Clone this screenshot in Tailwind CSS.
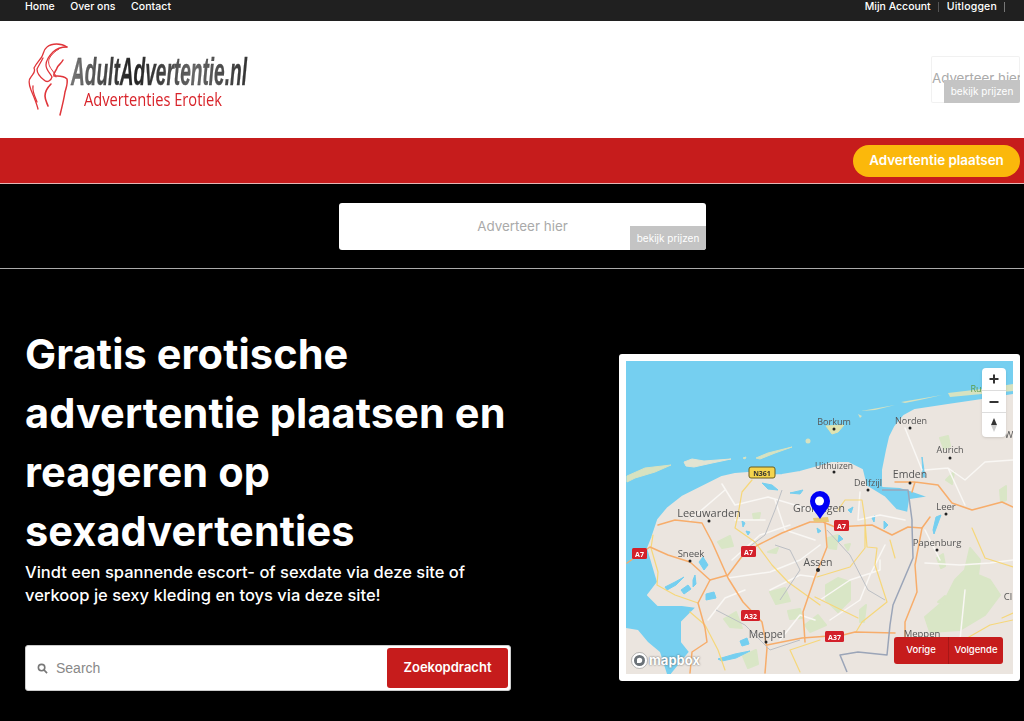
<!DOCTYPE html>
<html lang="nl">

<head>
  <meta charset="UTF-8">
  <meta name="viewport" content="width=device-width, initial-scale=1.0">
  <title>AdultAdvertentie.nl</title>
  <script src="https://cdn.jsdelivr.net/npm/@tailwindcss/browser@4"></script>
</head>

<body class="bg-black font-['Inter',sans-serif] overflow-hidden h-[721px]">
  <!-- Top bar -->
  <nav class="h-[21px] bg-[#202020] flex items-center justify-between pl-[25px] pr-[19px] text-white text-[10.5px] font-medium pb-[7px]">
    <div class="flex gap-[15.500px]">
      <a>Home</a>
      <a>Over ons</a>
      <a class="tracking-[0.1px]">Contact</a>
    </div>
    <div class="flex items-center">
      <a>Mijn Account</a>
      <span class="w-px h-[10px] bg-[#555] ml-[7px] mr-[8px]"></span>
      <a class="tracking-[0.2px]">Uitloggen</a>
      <span class="w-px h-[10px] bg-[#777] ml-[7px]"></span>
    </div>
  </nav>

  <!-- Header with logo -->
  <header class="h-[117px] bg-white flex items-center justify-between pr-[4px] pl-[28px]">
    <svg class="w-[222px] h-[76px] mt-[1px] overflow-visible blur-[0.4px]" viewBox="28 40 222 76">
      <defs>
        <linearGradient id="logoText" x1="0" y1="0" x2="1" y2="0">
          <stop offset="0" stop-color="#777" />
          <stop offset="0.35" stop-color="#222" />
          <stop offset="0.7" stop-color="#666" />
          <stop offset="1" stop-color="#333" />
        </linearGradient>
      </defs>
      <g fill="none" stroke="#e0353a" stroke-linecap="round" stroke-linejoin="round">
        <path stroke-width="1.300" d="M67 45C61 41 52 41 47 45 43 48 44 52 41 56 38 60 36 62 34 66 36 70 33 72 31 75 28 78 29 83 31 88 33 93 36 99 38 107" />
        <path stroke-width="1.300" d="M67 45C62 45 57 46 53 50 49 54 46 58 46 63 46 68 50 71 52 75 51 79 47 81 44 78 40 75 37 71 37 67 39 63 41 60 43 56" />
        <path stroke-width="1" d="M59 47C55 49 51 53 49 57 48 61 49 64 52 68 54 71 56 73 56 75" />
        <path stroke-width="1.500" d="M63 58C61 62 58 63 57 66 56 69 53 71 54 74 58 74 63 73 67 77 68 82 66 86 65 90 64 97 62 105 60 113" />
        <path stroke-width="1.600" d="M51 82C48 85 45 90 45 94 45 98 47 101 48 104" />
        <path stroke-width="1.300" d="M33 84C32 89 35 95 37 100" />
      </g>
      <text x="71" y="83" font-family="'Liberation Sans', sans-serif" font-weight="700" font-style="italic" font-size="39" fill="url(#logoText)" stroke="#444" stroke-width="0.300" textLength="176" lengthAdjust="spacingAndGlyphs">AdultAdvertentie.nl</text>
      <text x="84" y="104" font-family="'Open Sans', sans-serif" font-size="19" font-weight="500" fill="#d8232a" textLength="138" lengthAdjust="spacingAndGlyphs">Advertenties Erotiek</text>
    </svg>
    <div class="relative w-[89px] h-[47px] -mt-[1px] shadow-[inset_0_0_0_1px_#f1f1f1] rounded-[2px] overflow-hidden flex items-center">
      <span class="ml-[1px] text-[#aaa] text-[13.3px] whitespace-nowrap">Adverteer hier</span>
      <span class="absolute right-0 bottom-0 w-[76px] h-[23px] bg-[#c4c4c4] text-white text-[10px] flex items-center justify-center">bekijk prijzen</span>
    </div>
  </header>

  <!-- Red bar -->
  <div class="h-[46px] bg-[#c61c1c] border-b border-[#e5b5b5] flex items-center justify-end pr-[4px]">
    <a class="w-[167px] h-[32px] rounded-full bg-[#fbb80b] text-white text-[13.400px] font-semibold flex items-center justify-center">Advertentie plaatsen</a>
  </div>

  <!-- Banner -->
  <div class="h-[85px] border-b border-[#aaa] flex justify-center pt-[19px] pl-[21px]">
    <div class="relative w-[367px] h-[47px] bg-white rounded-[3px] overflow-hidden flex items-center justify-center">
      <span class="text-[#aaa] text-[13.400px]">Adverteer hier</span>
      <span class="absolute right-0 bottom-0 w-[76px] h-[24px] bg-[#c4c4c4] text-white text-[10px] flex items-center justify-center">bekijk prijzen</span>
    </div>
  </div>

  <!-- Hero -->
  <main class="flex justify-between pl-[25px] pr-[4px]">
    <section class="w-[486px] pt-[56px]">
      <h1 class="text-white font-bold text-[41.500px] tracking-[0.1px] leading-[59px] whitespace-nowrap">Gratis erotische<br>advertentie plaatsen en<br>reageren op<br>sexadvertenties</h1>
      <p class="text-white text-[16.500px] font-medium leading-[23px] whitespace-nowrap">Vindt een spannende escort- of sexdate via deze site of<br>verkoop je sexy kleding en toys via deze site!</p>
      <form class="mt-[38px] h-[46px] bg-white rounded-[3px] border border-[#ccc] flex items-center pl-[11px] pr-[2px]">
        <svg class="w-[11px] h-[11px] text-[#777]" viewBox="0 0 24 24" fill="none" stroke="currentColor" stroke-width="3.500">
          <circle cx="10" cy="10" r="7" />
          <path d="M15 15l7 7" />
        </svg>
        <span class="ml-[8px] flex-1 text-[#888] text-[14px] font-['Liberation_Sans',sans-serif]">Search</span>
        <button class="w-[121px] h-[40px] rounded-[3px] bg-[#c61c1c] text-white text-[13px] font-semibold">Zoekopdracht</button>
      </form>
    </section>

    <!-- Map card -->
    <section class="mt-[85px] w-[401px] h-[327px] bg-white rounded-[3px] p-[7px]">
      <div class="relative w-[387px] h-[313px] overflow-hidden">
        <svg class="w-[387px] h-[313px] block blur-[0.5px]" viewBox="626 361 387 313" font-family="'Open Sans', sans-serif">
          <rect x="626" y="361" width="387" height="313" fill="#75cff0" />
          <!-- land -->
          <path fill="#ebe5df" stroke="#ebe5df" stroke-width="2" stroke-linejoin="round" d="M658 520 668 508 682 497 700 488 722 477 735 474 748 473 765 476 782 475 800 472 818 467 832 463 848 463 862 470 866 486 884 497 896 510 908 513 910 500 930 497 910 490 900 487 883 486 883 470 887 450 890 437 895 427 904 416 915 410 948 405 982 400 1013 395V674H672L690 652 682 642 682 622 697 607 682 605 658 605 648 595 658 582 655 572 648 548 652 538Z" />
          <path fill="#ebe5df" d="M626 628 638 630 648 642 660 652 667 674H626Z" />
          <!-- islands -->
          <path fill="#d7e2c0" stroke="#d7e2c0" stroke-linejoin="round" d="M627 476 645 468 671 465 655 472 635 478 627 482Z" />
          <path fill="#e3e4d2" stroke="#e3e4d2" stroke-linejoin="round" d="M684 462 692 459 704 461 731 459 712 463 694 467 686 466Z" />
          <path fill="#d7e2c0" stroke="#d7e2c0" stroke-linejoin="round" d="M756 458 768 453 792 447 775 453 760 459ZM743 458 746 457 745 459Z" />
          <circle cx="808" cy="441" r="2.500" fill="#d7e2c0" />
          <path fill="#dfe3b0" stroke="#dfe3b0" stroke-linejoin="round" d="M826 426 844 425 838 432 832 434Z" />
          <path fill="#d7e2c0" d="M861 411 895 405 875 410ZM858 414 862 416 860 418ZM901 402 942 395 920 400 905 403ZM948 393 982 389 1013 384V391L982 394 950 397Z" />
          <!-- green patches -->
          <g fill="#d9e6c6" stroke="#d9e6c6" stroke-width="2" stroke-linejoin="round">
            <path d="M718 542 730 536 733 546 722 548ZM753 514 760 513 759 518 754 519ZM768 552 778 548 776 553ZM770 592 785 588 790 601 776 604ZM724 619 736 612 742 628 730 627ZM788 611 800 609 802 618 790 619ZM828 538 838 535 836 549 829 548Z" />
            <path d="M826 585 838 578 850 582 850 600 838 612 826 600ZM805 625 818 615 826 625 810 632ZM845 545 850 544 848 550ZM860 610 866 605 864 622 860 622ZM743 656 756 650 758 664 748 668Z" />
            <path d="M925 617 945 600 955 580 965 570 970 548 980 560 978 575 990 580 1000 595 985 615 960 630 930 632Z" />
            <path d="M938 602 945 596 948 605ZM937 558 943 554 945 566 941 568ZM940 438 948 436 950 446 944 449ZM946 480 954 472 952 484ZM1000 490 1006 486 1006 500 1001 502Z" />
          </g>
          <!-- water -->
          <g fill="#75cff0" stroke="#75cff0" stroke-linejoin="round">
            <path d="M665 587 675 582 684 577 676 585 667 590ZM681 590 688 585 691 589 684 594ZM693 580 695 575 696 584 693 587ZM706 594 714 592 716 598 706 600ZM699 562 703 557 708 565 704 570ZM718 659 735 654 750 651 736 658 722 661ZM740 641 747 638 749 644 742 646Z" />
            <path d="M762 483 772 485 778 490 768 489ZM742 521 745 523 743 527ZM746 531 750 532 748 535ZM790 493 803 490 800 494ZM817 528 821 531 818 533ZM839 535 843 539 838 542ZM848 510 853 507 851 513ZM872 518 875 515 874 522Z" />
            <path d="M922 457 925 477 923 477ZM936 517 941 515 934 534 933 530ZM884 521 888 525 884 529Z" />
          </g>
          <!-- white roads -->
          <g fill="none" stroke="#f9f7f4" stroke-width="1.500" stroke-linejoin="round" stroke-linecap="round">
            <path d="M722 484 735 505 768 497 795 505 815 512M690 520 725 490M775 500 785 530 815 540M860 492 858 520 880 515 905 520M925 470 948 468 965 480 985 462 1013 460M905 428 922 470M948 468 965 505M732 560 760 535 790 525M728 578 770 572 800 560 820 545M770 590 800 575 815 577M708 620 725 598 745 590M820 600 850 580 880 570 880 560M885 545 870 575 860 600M925 563 960 565 990 563 1013 560M925 530 940 560M830 620 860 600M780 640 800 615 815 620M960 640 965 590M735 520 765 520" />
          </g>
          <!-- yellow roads -->
          <g fill="none" stroke="#f6d77a" stroke-width="1.200" stroke-linejoin="round" stroke-linecap="round">
            <path d="M752 480 742 492 738 515 735 528 755 542 772 565 788 582 820 605M653 535 651 548 658 572 657 585 675 595 698 603M817 577 850 567 865 548 865 520 862 500M865 522 867 547 877 548 875 565 887 602 862 622 856 632M815 597 858 618M972 528 985 558 1013 567M1002 618 1013 613M890 540 895 558M690 612 705 625 718 650 725 670M800 672 790 650 820 640M955 645 990 625 1013 620M862 500 845 500 838 510" />
          </g>
          <!-- motorways -->
          <g fill="none" stroke="#f7ad6b" stroke-width="1.500" stroke-linejoin="round" stroke-linecap="round">
            <path d="M627 563 650 547 668 555 690 562 710 580 728 575 743 555 758 545 782 533 810 522 823 522 835 527 872 525 892 535 908 527 922 528 930 517" />
            <path d="M658 525 675 520 702 523 712 542 728 578 743 602 762 622 767 648 765 673M710 580 698 603 705 628 707 642 692 652 690 673M767 645 802 638 843 635 855 632 895 633" />
            <path d="M825 523 827 547 815 577 803 612 805 642M922 528 915 565 917 592 905 622 905 637M895 482 915 482 938 485 952 503 972 510 1002 502 1013 507M915 482 912 492" />
          </g>
          <!-- country border and rail -->
          <path fill="none" stroke="#bcbfc4" stroke-width="1" d="M782 490 775 510 765 535 745 550M827 530 850 555 868 590 885 600M716 610 745 625 770 650 800 640M775 545 790 550 800 570 780 600" />
          <path fill="none" stroke="#9ba5b8" stroke-width="1.500" stroke-linejoin="round" d="M882 490 908 490 912 520 912 525 913 558 893 605 890 625 887 655 858 652 840 655 847 672" />
          <!-- Groningen town -->
          <path fill="#e8c878" d="M813 518 828 517 829 522 814 522Z" />
          <!-- road shields -->
          <g font-size="7" font-weight="700" text-anchor="middle" fill="#fff">
            <rect x="749" y="467" width="26" height="11" rx="2" fill="#f4d44d" stroke="#6b5d1c" />
            <text x="762" y="475.500" fill="#333">N361</text>
            <rect x="632" y="548" width="15" height="11" rx="1.500" fill="#d3202a" />
            <text x="639.500" y="556.500">A7</text>
            <rect x="741" y="546" width="15" height="11" rx="1.500" fill="#d3202a" />
            <text x="748.500" y="554.500">A7</text>
            <rect x="741" y="610" width="19" height="11" rx="1.500" fill="#d3202a" />
            <text x="750.500" y="618.500">A32</text>
            <rect x="834" y="520" width="15" height="11" rx="1.500" fill="#d3202a" />
            <text x="841.500" y="528.500">A7</text>
            <rect x="825" y="631" width="19" height="11" rx="1.500" fill="#d3202a" />
            <text x="834.500" y="639.500">A37</text>
          </g>
          <!-- towns -->
          <g fill="#222">
            <circle cx="709" cy="521" r="1.500" /><circle cx="690" cy="561" r="1.500" /><circle cx="834" cy="429" r="1.500" /><circle cx="910" cy="428" r="1.500" /><circle cx="950" cy="458" r="1.500" /><circle cx="910" cy="483" r="1.500" /><circle cx="868" cy="490" r="1.500" /><circle cx="834" cy="472" r="1.500" /><circle cx="946" cy="514" r="1.500" /><circle cx="937" cy="550" r="1.500" /><circle cx="818" cy="570" r="2" /><circle cx="766" cy="642" r="1.500" />
          </g>
          <g fill="#555" font-weight="500" text-anchor="middle">
            <text x="709" y="517" font-size="11">Leeuwarden</text>
            <text x="691" y="557" font-size="9.500">Sneek</text>
            <text x="834" y="425" font-size="9">Borkum</text>
            <text x="911" y="424" font-size="9">Norden</text>
            <text x="950" y="453" font-size="9">Aurich</text>
            <text x="834" y="469" font-size="8.500">Uithuizen</text>
            <text x="868" y="486" font-size="9">Delfzijl</text>
            <text x="910" y="478" font-size="10.500">Emden</text>
            <text x="946" y="510" font-size="9.500">Leer</text>
            <text x="937" y="546" font-size="9.500">Papenburg</text>
            <text x="818" y="566" font-size="10.500">Assen</text>
            <text x="767" y="638" font-size="10.500">Meppel</text>
            <text x="819" y="512" font-size="10.500">Groningen</text>
            <text x="922" y="637" font-size="9.500">Meppen</text>
            <text x="1009" y="438" font-size="9.500">W</text>
            <text x="1008" y="600" font-size="9.500">Cl</text>
            <text x="976" y="392" font-size="9" fill="#5c9c4a">Ru</text>
          </g>
          <!-- marker -->
          <path fill="#0000f5" d="M820 519C816 512 810 508 810 501A10 10 0 0 1 830 501C830 508 824 512 820 519Z" />
          <circle cx="819.500" cy="501" r="4.500" fill="#fff" />
        </svg>

        <!-- map controls -->
        <div class="absolute top-[7px] right-[7px] w-[24px] h-[69px] bg-white rounded-[4px] shadow-sm flex flex-col divide-y divide-[#ddd]">
          <button class="h-[23px] flex items-center justify-center">
            <svg class="w-[12px] h-[12px]" viewBox="0 0 12 12"><path d="M6 1.500v9M1.500 6h9" stroke="#333" stroke-width="2" /></svg>
          </button>
          <button class="h-[22px] flex items-center justify-center">
            <svg class="w-[12px] h-[12px]" viewBox="0 0 12 12"><path d="M1.500 6h9" stroke="#333" stroke-width="2" /></svg>
          </button>
          <button class="h-[24px] flex items-center justify-center">
            <svg class="w-[12px] h-[18px]" viewBox="0 0 12 18"><path d="M6 2 9 9H3Z" fill="#333" /><path d="M6 16 9 9H3Z" fill="#ccc" /></svg>
          </button>
        </div>

        <!-- mapbox logo -->
        <div class="absolute left-[5px] bottom-[4px] flex items-center text-white text-[13px] font-bold [text-shadow:0_0_2px_#555]">
          <svg class="w-[17px] h-[17px] mr-[1px]" viewBox="0 0 17 17">
            <circle cx="8.500" cy="8.500" r="8" fill="#fff" stroke="#777" stroke-width="0.500" />
            <circle cx="8.500" cy="8.500" r="5.500" fill="#6b7278" />
            <path d="M6 11V7.500C6 6 9 5 10.500 6.500 12 8 11 11 9 11Z" fill="#fff" />
          </svg>
          mapbox
        </div>

        <!-- prev / next -->
        <div class="absolute left-[268px] top-[276px] w-[109px] h-[27px] flex rounded-[3px] overflow-hidden bg-[#c61c1c] text-white text-[9.500px] font-medium">
          <button class="w-[55px] border-r border-[#a81616]">Vorige</button>
          <button class="flex-1">Volgende</button>
        </div>
      </div>
    </section>
  </main>
</body>

</html>
